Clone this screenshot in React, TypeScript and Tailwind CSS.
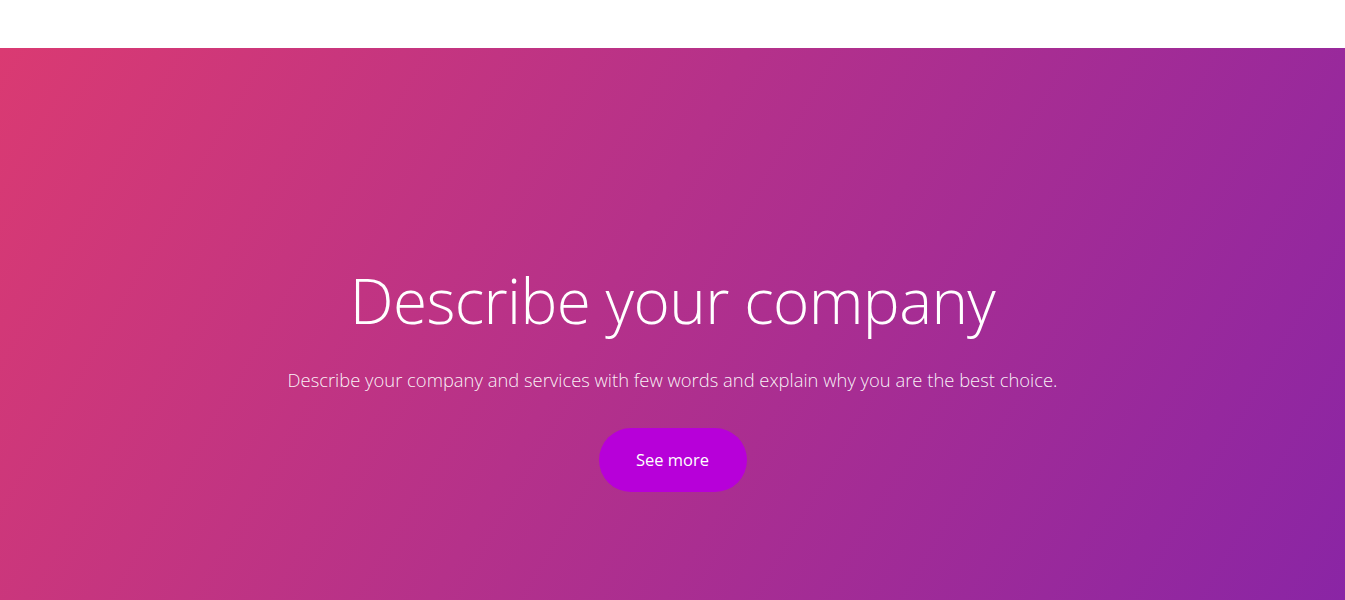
export default function App() {
  return (
    <div className="min-h-screen bg-white font-['Open_Sans',sans-serif] text-white">
      <header className="h-12 bg-white" />
      <section className="flex h-[552px] flex-col items-center bg-[linear-gradient(120deg,#da3a72_0%,#b5318a_45%,#8a25a5_100%)] pt-[212px] text-center">
        <h1 className="text-[62px] font-light leading-[80px] tracking-[-0.01em]">
          Describe your company
        </h1>
        <p className="mt-[26px] text-[18.4px] font-light leading-7 text-white/95">
          Describe your company and services with few words and explain why you are the best choice.
        </p>
        <a
          href="#"
          className="mt-[34px] inline-flex h-16 w-[148px] items-center justify-center rounded-full bg-[#b700d9] text-[16.5px] font-normal"
        >
          See more
        </a>
      </section>
    </div>
  );
}
